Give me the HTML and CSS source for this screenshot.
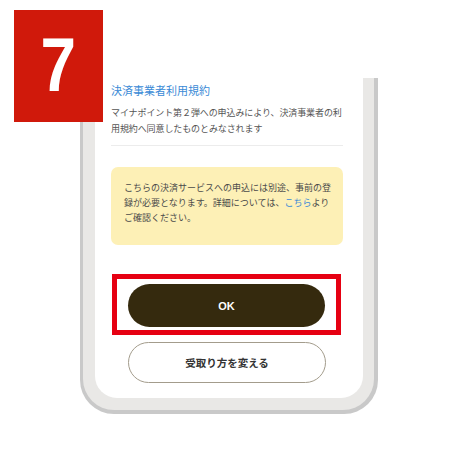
FILE: index.html
```html
<!DOCTYPE html>
<html lang="ja">
<head>
<meta charset="utf-8">
<title>Step 7</title>
<link rel="stylesheet" href="styles.css">
</head>
<body>
<div class="stage">
  <div class="badge"><span class="badge-num">7</span></div>
  <div class="phone">
    <div class="bezel">
      <div class="screen">
        <a class="terms-title">決済事業者利用規約</a>
        <p class="terms-text">マイナポイント第２弾への申込みにより、決済事業者の利<br>用規約へ同意したものとみなされます</p>
        <div class="divider"></div>
        <div class="notice">こちらの決済サービスへの申込には別途、事前の登<br>録が必要となります。詳細については、<a class="notice-link">こちら</a>より<br>ご確認ください。</div>
        <div class="ok-highlight"><button class="btn-ok">OK</button></div>
        <button class="btn-change">受取り方を変える</button>
      </div>
    </div>
  </div>
</div>
</body>
</html>
```

FILE: styles.css
```css
* { box-sizing: border-box; }
html, body { margin: 0; padding: 0; background: #ffffff; }
body { width: 473px; height: 450px; overflow: hidden; font-family: "Noto Sans CJK JP", "Noto Sans", sans-serif; }

.stage { position: relative; width: 473px; height: 450px; padding-top: 78px; padding-left: 80px; }

.badge {
  position: absolute; left: 14px; top: 10px; width: 89px; height: 112px;
  background: #d0190b; display: flex; align-items: center; justify-content: center;
  padding-bottom: 3px; z-index: 2;
}
.badge-num {
  font-family: "Liberation Sans", Arial, sans-serif; font-weight: 700; font-size: 76px;
  line-height: 76px; color: #ffffff; display: block; transform: scaleX(0.84);
}

.phone {
  width: 298px; background: #c9c9c9; padding: 0 4px 4px 3px;
  border-radius: 0 0 34px 34px;
}
.bezel {
  background: #e9e8e6; padding: 0 11px 12px 12px; border-radius: 0 0 31px 31px;
}
.screen {
  background: #ffffff; border-radius: 0 0 22px 22px;
  padding: 4px 20px 15px 16px; display: flex; flex-direction: column;
}

.terms-title {
  font-size: 11px; line-height: 16px; color: #3a8ad6; display: block; text-decoration: none;
}
.terms-text {
  margin: 7px 0 0; font-size: 9px; line-height: 15.5px; color: #555555; white-space: nowrap;
  letter-spacing: -0.1px;
}
.divider { margin-top: 9px; height: 1px; background: #ececec; }

.notice {
  margin-top: 21px; background: #fdf0b6; border-radius: 7px;
  padding: 13px 8px 20px 13px; font-size: 9px; line-height: 15px; color: #4a4a4a;
  white-space: nowrap;
}
.notice-link { color: #3a8ad6; }

.ok-highlight {
  margin: 29px 2px 0 1px; border: 5px solid #e60012; padding: 5px 11px 3px 11px;
}
.btn-ok {
  display: block; width: 197px; height: 43px; border: none; border-radius: 22px;
  background: #352a0e; color: #ffffff; font-family: "Liberation Sans", Arial, sans-serif;
  font-weight: 700; font-size: 11px; padding: 0; margin: 0;
}
.btn-change {
  display: block; margin: 7px auto 0; width: 198px; height: 41px;
  border: 1.5px solid #a39c8c; border-radius: 21px; background: #ffffff;
  color: #333333; font-family: "Noto Sans CJK JP", sans-serif; font-weight: 700; font-size: 10.5px;
  padding: 0;
}
```
